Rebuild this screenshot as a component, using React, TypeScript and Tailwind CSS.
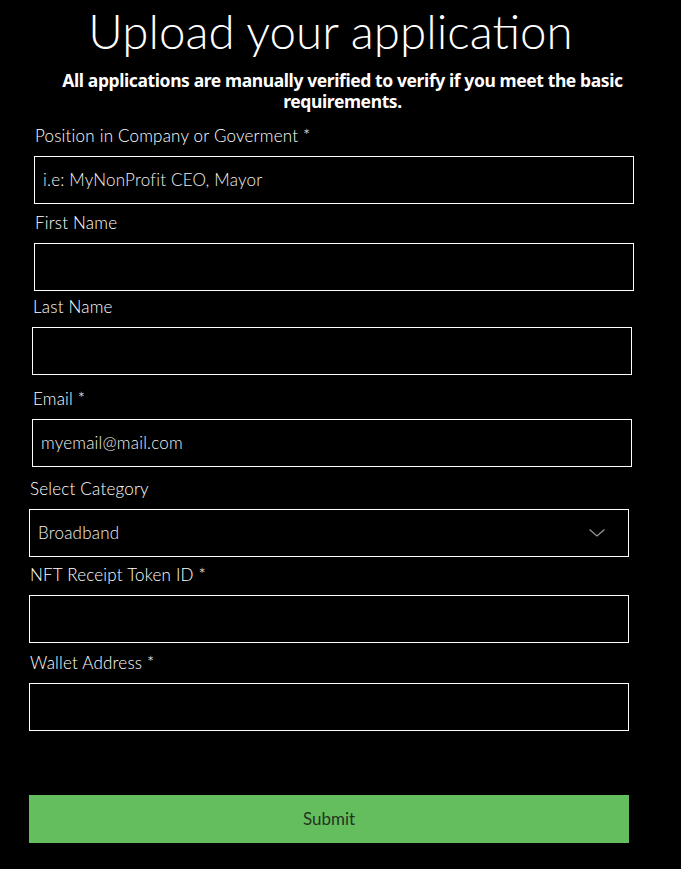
import React from "react";

const body = { fontFamily: "Lato, 'Open Sans', 'Liberation Sans', sans-serif" };

function Field({
  label,
  value,
  ml,
  mt,
  select,
}: {
  label: string;
  value?: string;
  ml: string;
  mt: string;
  select?: boolean;
}) {
  return (
    <div className={`${ml} ${mt} w-[600px]`}>
      <div className="h-6 pl-px text-[17px] leading-6 tracking-[0.2px] text-white font-light">{label}</div>
      <div className="mt-2 flex h-12 w-[600px] items-center justify-between border border-white px-2">
        <span className="text-[17px] tracking-[0.2px] font-light text-[#f0f0f0]">{value}</span>
        {select && (
          <svg width="16" height="8" viewBox="0 0 16 8" className="mr-[15px]">
            <path d="M0.5 0.5 L8 7 L15.5 0.5" fill="none" stroke="#9a9a9a" strokeWidth="1.2" />
          </svg>
        )}
      </div>
    </div>
  );
}

export default function App() {
  return (
    <div className="min-h-[869px] w-[681px] bg-black" style={body}>
      <div className="flex flex-col">
        <h1
          className="pt-[5px] text-center text-[47.5px] font-light leading-[52px] text-white pr-[20px]"
          style={{ fontFamily: "Lato, 'Noto Sans', sans-serif" }}
        >
          Upload your application
        </h1>
        <p
          className="mx-auto mt-[13px] w-[600px] text-center text-[17.5px] font-bold leading-[21px] tracking-[-0.4px] text-white pl-[4px]"
          style={{ fontFamily: "'Noto Sans', Lato, sans-serif" }}
        >
          All applications are manually verified to verify if you meet the basic requirements.
        </p>
        <Field label="Position in Company or Goverment *" value="i.e: MyNonProfit CEO, Mayor" ml="ml-[34px]" mt="mt-[12px]" />
        <Field label="First Name" ml="ml-[34px]" mt="mt-[7px]" />
        <Field label="Last Name" ml="ml-[32px]" mt="mt-[4px]" />
        <Field label="Email *" value="myemail@mail.com" ml="ml-[32px]" mt="mt-[12px]" />
        <Field label="Select Category" value="Broadband" select ml="ml-[29px]" mt="mt-[10px]" />
        <Field label="NFT Receipt Token ID *" ml="ml-[29px]" mt="mt-[6px]" />
        <Field label="Wallet Address *" ml="ml-[29px]" mt="mt-[8px]" />
        <button className="ml-[29px] mt-[64px] h-12 w-[600px] bg-[#64be5e] text-[17px] font-normal text-[#243322]">
          Submit
        </button>
      </div>
    </div>
  );
}
